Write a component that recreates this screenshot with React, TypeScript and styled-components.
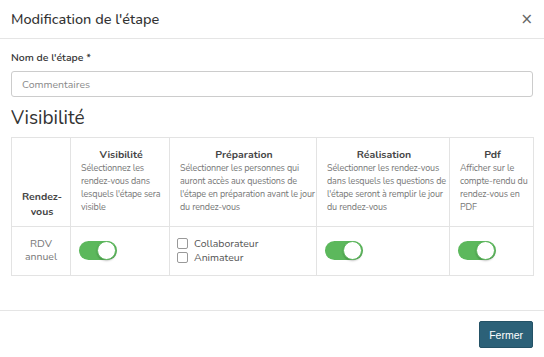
import React, { useState } from 'react';
import styled, { createGlobalStyle } from 'styled-components';

const GlobalStyle = createGlobalStyle`
    html, body {
        margin: 0;
        padding: 0;
        background: #ffffff;
    }
    body {
        font-family: Nunito, Lato, "Open Sans", sans-serif;
        color: #333;
    }
`;

const Modal = styled.div`
    width: 544px;
    height: 357px;
    background: #fff;
    display: flex;
    flex-direction: column;
    box-sizing: border-box;
`;

const Header = styled.div`
    height: 39px;
    box-sizing: border-box;
    display: flex;
    align-items: center;
    justify-content: space-between;
    padding: 0 11px 0 11px;
    border-bottom: 1px solid #e5e5e5;
`;

const Title = styled.h4`
    margin: 0;
    font-size: 14.5px;
    font-weight: 500;
    color: #333;
`;

const Close = styled.button`
    border: none;
    background: none;
    padding: 0;
    color: #666;
    font-size: 15px;
    line-height: 1;
    font-family: "DejaVu Sans", sans-serif;
    cursor: pointer;
`;

const Body = styled.div`
    flex: 1;
    padding: 11px 11px 0 11px;
    border-bottom: 1px solid #e5e5e5;
`;

const Label = styled.label`
    display: block;
    font-size: 10.5px;
    font-weight: 600;
    color: #333;
    margin-bottom: 6px;
`;

const Input = styled.input`
    width: 100%;
    box-sizing: border-box;
    height: 26px;
    border: 1px solid #ccc;
    border-radius: 3px;
    padding: 0 10px;
    font-family: inherit;
    font-size: 10.5px;
    color: #333;
    &::placeholder {
        color: #8a8a8a;
    }
`;

const Section = styled.h3`
    margin: 8px 0 6px 0;
    font-size: 19px;
    font-weight: 400;
    color: #333;
`;

const Table = styled.table`
    width: 522px;
    border-collapse: collapse;
    table-layout: fixed;
`;

const Th = styled.th<{ $w: number; $low?: boolean }>`
    box-sizing: border-box;
    width: ${(p) => p.$w}px;
    border: 1px solid #e3e3e3;
    padding: 9px 8px ${(p) => (p.$low ? '7px' : '12px')} 10px;
    vertical-align: bottom;
    font-size: 10.5px;
    font-weight: 700;
    color: #444;
    text-align: center;
    line-height: 15px;
`;

const ThTitle = styled.div`
    margin-bottom: 0;
`;

const Desc = styled.div`
    font-size: 9px;
    font-weight: 400;
    line-height: 13px;
    letter-spacing: -0.15px;
    color: #777;
    text-align: left;
`;

const DescLine = styled.div`
    white-space: nowrap;
`;

const Td = styled.td<{ $center?: boolean }>`
    border: 1px solid #e3e3e3;
    padding: 8px 8px 10px ${(p) => (p.$center ? '8px' : '7px')};
    vertical-align: middle;
    font-size: 10.5px;
    color: #777;
    text-align: ${(p) => (p.$center ? 'center' : 'left')};
    line-height: 13px;
    height: 30px;
`;

const Track = styled.button<{ $on: boolean }>`
    position: relative;
    width: 38px;
    height: 19px;
    border-radius: 10px;
    border: none;
    padding: 0;
    margin-left: 1px;
    background: ${(p) => (p.$on ? '#5cb85c' : '#ccc')};
    cursor: pointer;
    display: block;
`;

const Knob = styled.span<{ $on: boolean }>`
    position: absolute;
    top: 0;
    left: ${(p) => (p.$on ? '18px' : '0')};
    width: 19px;
    height: 19px;
    border-radius: 50%;
    background: #fff;
    box-sizing: border-box;
    border: 1px solid #5cb85c;
    box-shadow: 0 1px 2px rgba(0, 0, 0, 0.25);
`;

const CheckList = styled.div`
    display: flex;
    flex-direction: column;
    gap: 1px;
`;

const CheckRow = styled.label`
    display: flex;
    align-items: center;
    gap: 6px;
    font-size: 10.5px;
    color: #555;
`;

const Box = styled.span`
    width: 11px;
    height: 11px;
    box-sizing: border-box;
    border: 1px solid #999;
    border-radius: 2px;
    background: #fff;
`;

const Footer = styled.div`
    height: 45px;
    display: flex;
    align-items: center;
    justify-content: flex-end;
    padding: 1px 11px 0 11px;
`;

const Button = styled.button`
    background: #2c6178;
    color: #fff;
    border: 1px solid #245266;
    border-radius: 2px;
    height: 27px;
    padding: 0 9px;
    font-family: "Liberation Sans", Arial, sans-serif;
    font-size: 10.5px;
    cursor: pointer;
`;

const columns = [
    {
        title: 'Visibilité',
        width: 99,
        lines: ['Sélectionnez les', 'rendez-vous dans', "lesquels l'étape sera", 'visible'],
    },
    {
        title: 'Préparation',
        width: 147,
        lines: ['Sélectionner les personnes qui', 'auront accès aux questions de', "l'étape en préparation avant le jour", 'du rendez-vous'],
    },
    {
        title: 'Réalisation',
        width: 133,
        lines: ['Sélectionner les rendez-vous', 'dans lesquels les questions de', "l'étape seront à remplir le jour", 'du rendez-vous'],
    },
    {
        title: 'Pdf',
        width: 84,
        lines: ['Afficher sur le', 'compte-rendu du', 'rendez-vous en', 'PDF'],
    },
];

const Toggle: React.FC<{ initial: boolean }> = ({ initial }) => {
    const [on, setOn] = useState(initial);
    return (
        <Track $on={on} onClick={() => setOn(!on)}>
            <Knob $on={on} />
        </Track>
    );
};

const App: React.FC = () => {
    return (
        <>
            <GlobalStyle />
            <Modal>
                <Header>
                    <Title>Modification de l'étape</Title>
                    <Close>×</Close>
                </Header>
                <Body>
                    <Label>Nom de l'étape *</Label>
                    <Input placeholder="Commentaires" />
                    <Section>Visibilité</Section>
                    <Table>
                        <thead>
                            <tr>
                                <Th $w={59} $low>Rendez-vous</Th>
                                {columns.map((col) => (
                                    <Th key={col.title} $w={col.width}>
                                        <ThTitle>{col.title}</ThTitle>
                                        <Desc>
                                            {col.lines.map((line) => (
                                                <DescLine key={line}>{line}</DescLine>
                                            ))}
                                        </Desc>
                                    </Th>
                                ))}
                            </tr>
                        </thead>
                        <tbody>
                            <tr>
                                <Td $center>RDV annuel</Td>
                                <Td><Toggle initial={true} /></Td>
                                <Td>
                                    <CheckList>
                                        <CheckRow><Box />Collaborateur</CheckRow>
                                        <CheckRow><Box />Animateur</CheckRow>
                                    </CheckList>
                                </Td>
                                <Td><Toggle initial={true} /></Td>
                                <Td><Toggle initial={true} /></Td>
                            </tr>
                        </tbody>
                    </Table>
                </Body>
                <Footer>
                    <Button>Fermer</Button>
                </Footer>
            </Modal>
        </>
    );
};

export default App;
